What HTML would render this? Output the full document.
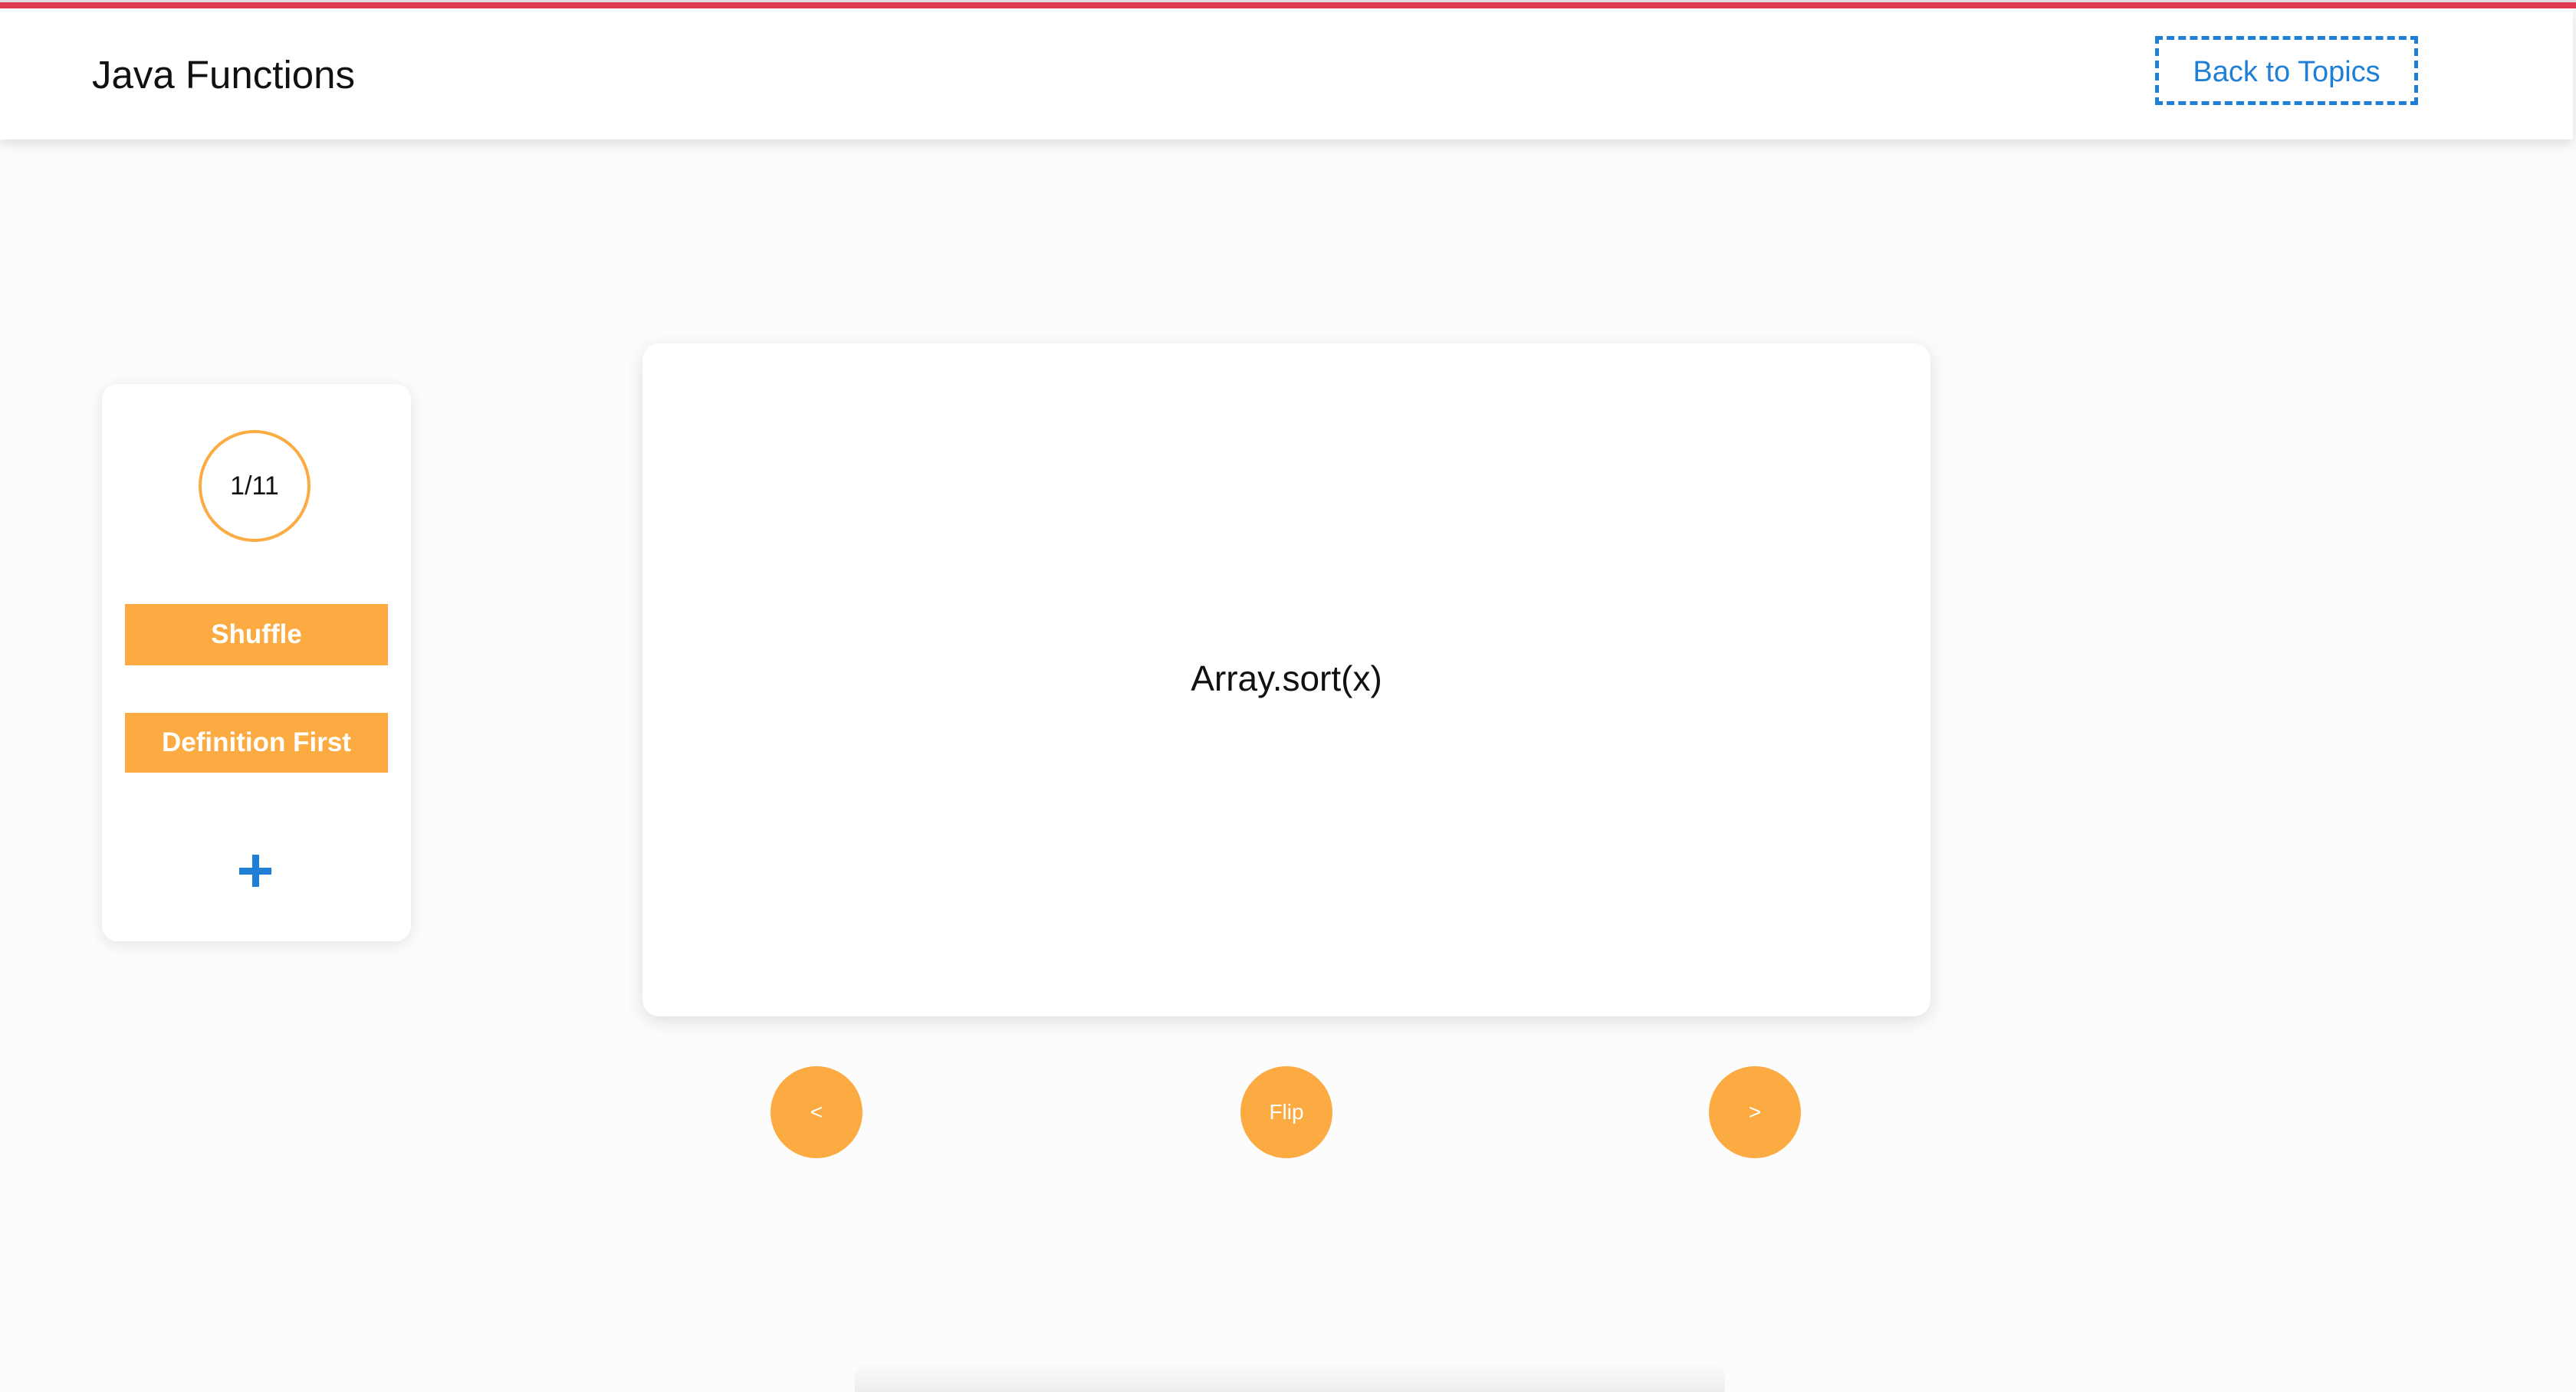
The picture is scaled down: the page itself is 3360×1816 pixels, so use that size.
<!DOCTYPE html>
<html style="width:3360px;height:1816px;overflow:hidden;"><head><style>
html,body{margin:0;padding:0;}
body{width:3360px;height:1816px;background:#fcfcfc;position:relative;overflow:hidden;font-family:"Liberation Sans",sans-serif;}
.topbar{position:absolute;left:0;top:0;width:3360px;height:11px;background:#e23a53;border-top:3px solid #ddd;box-sizing:border-box;}
.header{position:absolute;left:0;top:11px;width:3356px;height:171px;background:#fff;box-shadow:0 6px 14px rgba(0,0,0,0.12);}
.title{position:absolute;left:120px;top:57px;font-size:51px;color:#111;}
.back{position:absolute;left:2811px;top:47px;width:343px;height:90px;box-sizing:border-box;border:5px dashed #1f7fd6;color:#1f7fd6;font-size:38px;display:flex;align-items:center;justify-content:center;padding-top:4px;}
.panel{position:absolute;left:133px;top:501px;width:403px;height:727px;background:#fff;border-radius:20px;box-shadow:0 4px 20px rgba(0,0,0,0.1);}
.circle{position:absolute;left:259px;top:561px;width:146px;height:146px;box-sizing:border-box;border:4px solid #fbab41;border-radius:50%;display:flex;align-items:center;justify-content:center;font-size:34px;color:#111;}
.btn{position:absolute;left:163px;width:343px;background:#fcab42;color:#fff;font-weight:bold;font-size:35px;display:flex;align-items:center;justify-content:center;}
.plus1{position:absolute;left:312px;top:1132px;width:42px;height:9px;background:#1f7fd6;}
.plus2{position:absolute;left:329px;top:1115px;width:9px;height:42px;background:#1f7fd6;}
.card{position:absolute;left:838px;top:448px;width:1680px;height:878px;background:#fff;border-radius:22px;box-shadow:0 6px 24px rgba(0,0,0,0.12);}
.word{position:absolute;left:838px;top:858px;width:1680px;text-align:center;font-size:46px;color:#111;}
.rb{position:absolute;top:1391px;width:120px;height:120px;border-radius:50%;background:#fcab42;color:#fff;font-size:28px;display:flex;align-items:center;justify-content:center;}
.shade{position:absolute;left:1115px;top:1776px;width:1135px;height:40px;background:linear-gradient(to bottom,rgba(0,0,0,0),rgba(0,0,0,0.06));border-radius:20px 20px 0 0;}
</style></head><body>
<div class="topbar"></div>
<div class="header"><div class="title">Java Functions</div></div>
<div class="back">Back to Topics</div>
<div class="panel"></div>
<div class="circle">1/11</div>
<div class="btn" style="top:788px;height:80px;">Shuffle</div>
<div class="btn" style="top:930px;height:78px;">Definition First</div>
<div class="plus1"></div><div class="plus2"></div>
<div class="card"></div>
<div class="word">Array.sort(x)</div>
<div class="rb" style="left:1005px;">&lt;</div>
<div class="rb" style="left:1618px;">Flip</div>
<div class="rb" style="left:2229px;">&gt;</div>
<div class="shade"></div>
</body></html>
